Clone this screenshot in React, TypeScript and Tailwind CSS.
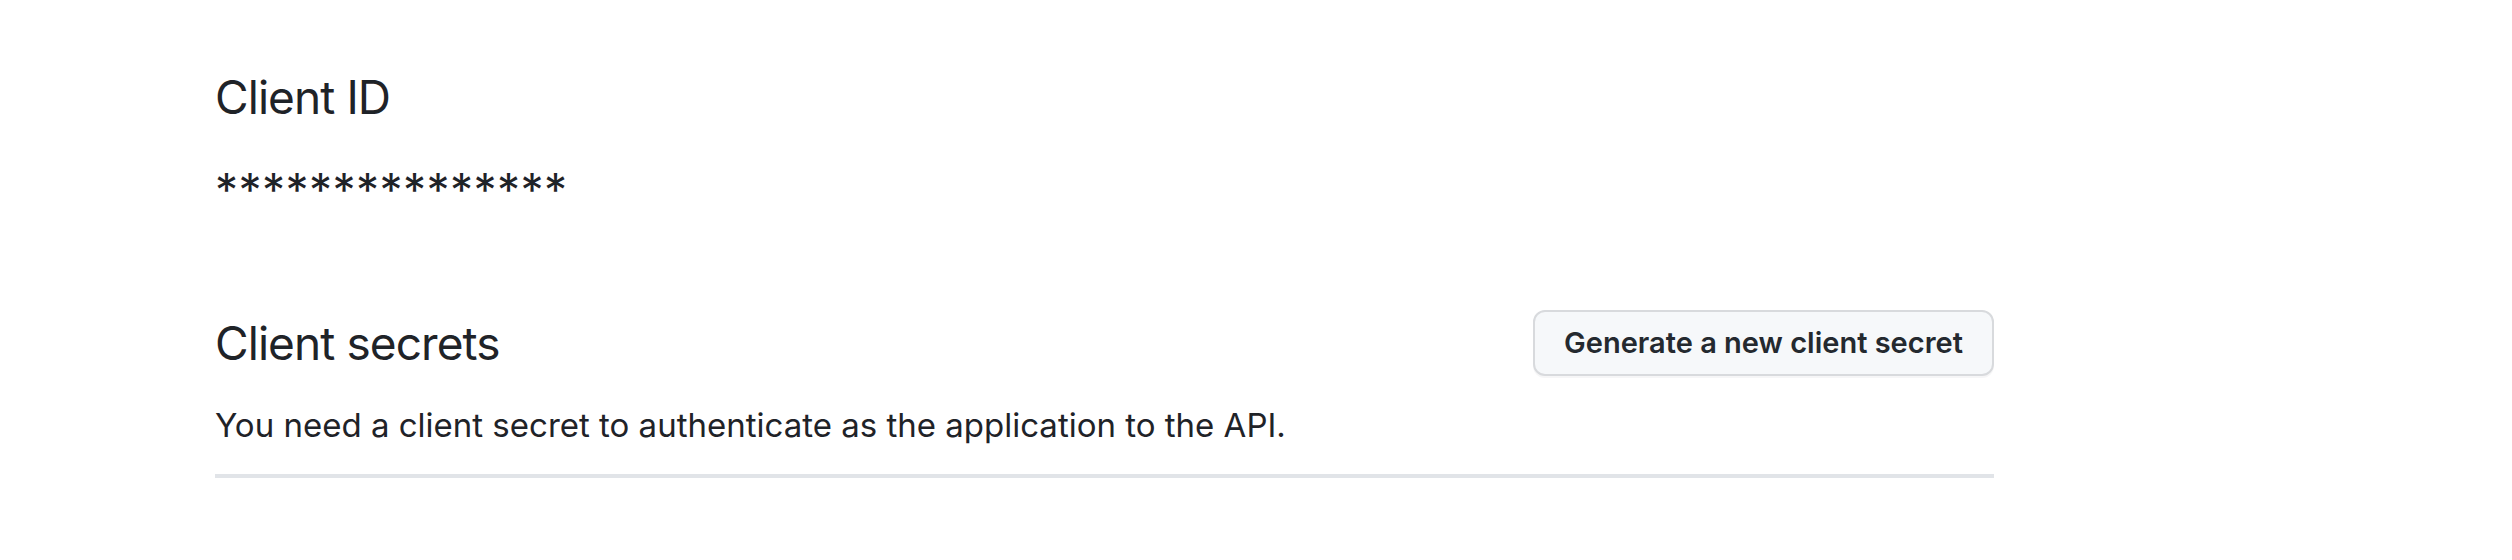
import React from 'react';

export default function App() {
  return (
    <div className="min-h-[560px] w-full bg-white pl-[215px] text-[#1f2328]" style={{ fontFamily: 'Inter, "Liberation Sans", sans-serif' }}>
      <div className="w-[1779px]">
        <h2 className="pt-[69px] text-[46px] leading-[56px] font-normal tracking-[-0.02em]">Client ID</h2>
        <div className="mt-[39px] h-[40px] text-[46px] leading-[52px] tracking-[0.01em]">***************</div>

        <div className="mt-[106px] border-b-4 border-[#e1e4e8] pb-[29px]">
          <div className="flex items-center justify-between">
            <h2 className="text-[46px] leading-[56px] font-normal tracking-[-0.02em]">Client secrets</h2>
            <button className="h-[66px] w-[461px] rounded-[12px] border-2 border-[#d8dadd] bg-[#f6f8fa] text-[29px] font-semibold text-[#24292f] shadow-[0_2px_0_rgba(31,35,40,0.04)]">
              Generate a new client secret
            </button>
          </div>
          <p className="mt-[29px] text-[33px] leading-[40px]">You need a client secret to authenticate as the application to the API.</p>
        </div>
      </div>
    </div>
  );
}
